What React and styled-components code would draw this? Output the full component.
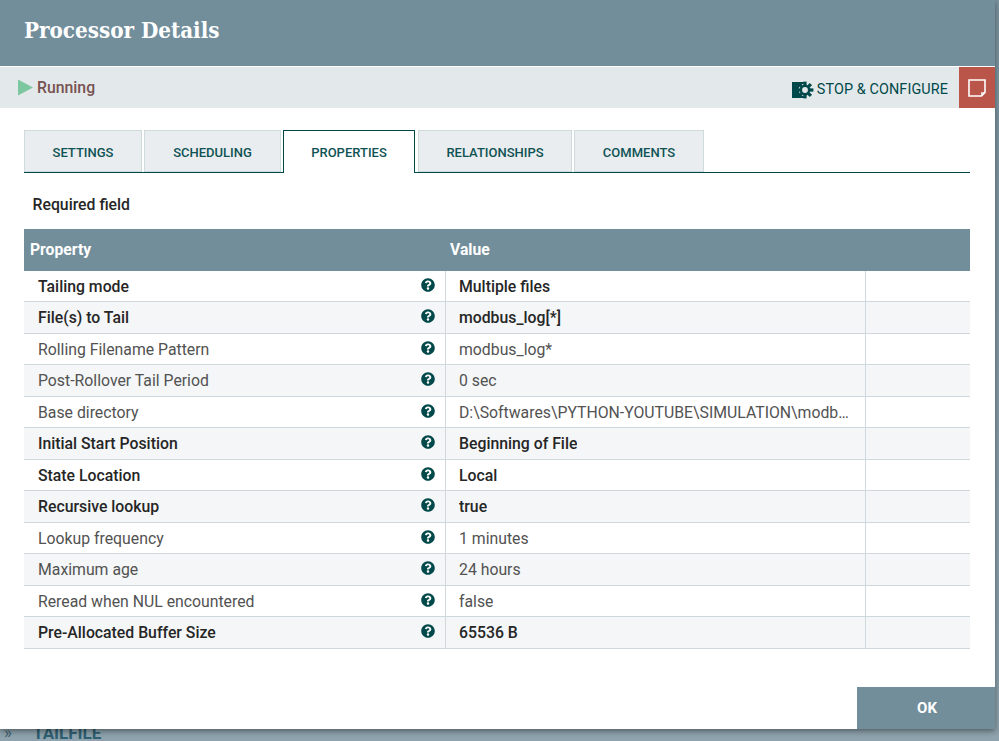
import React from 'react'
import styled, { createGlobalStyle } from 'styled-components'
import { FaQuestionCircle } from 'react-icons/fa'

const Global = createGlobalStyle`
  html, body { margin: 0; padding: 0; height: 100%; overflow: hidden; }
  body { font-family: Roboto, "Liberation Sans", sans-serif; }
`

const Canvas = styled.div`
  position: relative;
  width: 999px;
  height: 741px;
  overflow: hidden;
  background: linear-gradient(#7b949f, #8ea3ad);
`

const CanvasLabel = styled.div`
  position: absolute;
  left: 33px;
  top: 723px;
  font-size: 17px;
  font-weight: 700;
  color: #2f5f72;
`

const Chevrons = styled.div`
  position: absolute;
  left: 4px;
  top: 722px;
  font-size: 17px;
  line-height: 20px;
  color: #3f5f6e;
`

const Dialog = styled.div`
  position: absolute;
  left: 0;
  top: 0;
  width: 995px;
  height: 729px;
  display: flex;
  flex-direction: column;
  background: #fff;
  box-shadow: 0 2px 6px rgba(0, 0, 0, 0.45);
`

const Header = styled.div`
  height: 66px;
  padding: 13px 0 0 24px;
  box-sizing: border-box;
  background: #728e9b;
  color: #fff;
  font-family: "DejaVu Serif Condensed", "DejaVu Serif", serif;
  font-stretch: condensed;
  font-weight: 700;
  font-size: 22.2px;
  line-height: 34px;
`

const StatusBar = styled.div`
  margin-top: 1px;
  height: 41px;
  display: flex;
  align-items: center;
  background: #e3e8eb;
`

const RunState = styled.div`
  display: flex;
  align-items: center;
  margin-left: 17px;
  gap: 4px;
  font-size: 15.8px;
  font-weight: 500;
  color: #775351;
  flex: 1;
`

const StopButton = styled.div`
  display: flex;
  align-items: center;
  gap: 3px;
  margin: 4px 11px 0 0;
  font-size: 14.4px;
  color: #004849;
  letter-spacing: 0.1px;
`

const NoteButton = styled.div`
  width: 36px;
  height: 41px;
  display: flex;
  align-items: center;
  justify-content: center;
  background: #ba554a;
`

const Body = styled.div`
  flex: 1;
  padding: 22px 25px 0 24px;
`

const Tabs = styled.div`
  display: flex;
  height: 43px;
  box-sizing: border-box;
  border-bottom: 1px solid #004849;
`

const Tab = styled.div`
  box-sizing: border-box;
  width: ${p => p.$w}px;
  margin-right: ${p => p.$gap}px;
  height: ${p => (p.$active ? 43 : 42)}px;
  padding-top: ${p => (p.$active ? 0 : 2)}px;
  display: flex;
  align-items: center;
  justify-content: center;
  font-size: 13px;
  font-weight: 500;
  color: #0f5354;
  background: ${p => (p.$active ? '#fff' : '#e9edef')};
  border: 1px solid ${p => (p.$active ? '#004849' : '#cfdadb')};
  border-bottom: ${p => (p.$active ? '0' : '1px solid #cfdadb')};
`

const Required = styled.div`
  margin: 22px 0 0 8.5px;
  height: 34px;
  font-size: 15.8px;
  font-weight: 500;
  line-height: 20px;
  color: #262626;
`

const TableHead = styled.div`
  height: 41.5px;
  padding-bottom: 1px;
  box-sizing: border-box;
  display: flex;
  align-items: center;
  background: #728e9b;
  color: #fff;
  font-size: 15.7px;
  font-weight: 700;
`

const HeadCell = styled.div`
  width: ${p => p.$w}px;
  padding-left: ${p => p.$pad}px;
  box-sizing: border-box;
`

const Row = styled.div`
  display: grid;
  grid-template-columns: 422px 420px 104px;
  height: 31.5px;
  box-sizing: border-box;
  background: ${p => (p.$odd ? '#f4f6f7' : '#fff')};
  border-bottom: 1px solid #cfd8dd;
  font-size: 15.8px;
  font-weight: ${p => (p.$bold ? 500 : 400)};
  color: ${p => (p.$bold ? '#262626' : '#525252')};
`

const NameCell = styled.div`
  display: flex;
  align-items: center;
  justify-content: space-between;
  padding: 1px 10px 0 14px;
  border-right: 1px solid #cfd8dd;
`

const ValueCell = styled.div`
  display: flex;
  align-items: center;
  padding: 1px 16px 0 13px;
  min-width: 0;
  border-right: 1px solid #cfd8dd;
`

const Ellipsis = styled.span`
  overflow: hidden;
  white-space: nowrap;
  text-overflow: ellipsis;
`

const Help = styled(FaQuestionCircle)`
  width: 14px;
  height: 14px;
  margin-top: -3px;
  color: #004849;
`

const Footer = styled.div`
  display: flex;
  justify-content: flex-end;
`

const OkButton = styled.div`
  width: 138px;
  height: 42px;
  display: flex;
  align-items: center;
  justify-content: center;
  padding-left: 2px;
  box-sizing: border-box;
  background: #728e9b;
  color: #fff;
  font-size: 15px;
  font-weight: 700;
`

const rows = [
  ['Tailing mode', 'Multiple files', true],
  ['File(s) to Tail', 'modbus_log[*]', true],
  ['Rolling Filename Pattern', 'modbus_log*', false],
  ['Post-Rollover Tail Period', '0 sec', false],
  ['Base directory', 'D:\\Softwares\\PYTHON-YOUTUBE\\SIMULATION\\modbus_data', false],
  ['Initial Start Position', 'Beginning of File', true],
  ['State Location', 'Local', true],
  ['Recursive lookup', 'true', true],
  ['Lookup frequency', '1 minutes', false],
  ['Maximum age', '24 hours', false],
  ['Reread when NUL encountered', 'false', false],
  ['Pre-Allocated Buffer Size', '65536 B', true],
]

const tabs = [
  ['SETTINGS', 118, 2],
  ['SCHEDULING', 137, 2],
  ['PROPERTIES', 132, 3],
  ['RELATIONSHIPS', 154, 2],
  ['COMMENTS', 130, 0],
]

function PlayIcon() {
  return (
    <svg width="16" height="17" viewBox="0 0 16 17">
      <path d="M1 0.5 L16 8.5 L1 16.5 Z" fill="#7dc7a0" />
    </svg>
  )
}

function StopConfigureIcon() {
  const teeth = [0, 45, 90, 135, 180, 225, 270, 315]
  return (
    <svg width="22" height="18" viewBox="0 0 22 18">
      <rect x="0" y="1" width="14" height="16" fill="#004849" />
      <circle cx="13" cy="9" r="6.4" fill="#e3e8eb" />
      {teeth.map(a => (
        <rect key={a} x="11.4" y="0.6" width="3.2" height="3.4" fill="#004849" transform={`rotate(${a} 13 9)`} />
      ))}
      <circle cx="13" cy="9" r="4.2" fill="none" stroke="#004849" strokeWidth="2.6" />
    </svg>
  )
}

function NoteIcon() {
  return (
    <svg width="18" height="18" viewBox="0 0 18 18" fill="none" stroke="#fff" strokeWidth="1.6">
      <path d="M1 1 H17 V13.5 L13.5 17 H1 Z" />
      <path d="M13.8 16.5 V13.8 H16.5" strokeWidth="1.2" />
    </svg>
  )
}

export default function App() {
  return (
    <Canvas>
      <Global />
      <Chevrons>»</Chevrons>
      <CanvasLabel>TAILFILE</CanvasLabel>
      <Dialog>
        <Header>Processor Details</Header>
        <StatusBar>
          <RunState>
            <PlayIcon />
            Running
          </RunState>
          <StopButton>
            <StopConfigureIcon />
            STOP &amp; CONFIGURE
          </StopButton>
          <NoteButton>
            <NoteIcon />
          </NoteButton>
        </StatusBar>
        <Body>
          <Tabs>
            {tabs.map(([label, w, gap]) => (
              <Tab key={label} $w={w} $gap={gap} $active={label === 'PROPERTIES'}>
                {label}
              </Tab>
            ))}
          </Tabs>
          <Required>Required field</Required>
          <TableHead>
            <HeadCell $w={421} $pad={6}>Property</HeadCell>
            <HeadCell $w={420} $pad={5}>Value</HeadCell>
          </TableHead>
          {rows.map(([name, value, bold], i) => (
            <Row key={name} $odd={i % 2 === 1} $bold={bold}>
              <NameCell>
                {name}
                <Help />
              </NameCell>
              <ValueCell>
                <Ellipsis>{value}</Ellipsis>
              </ValueCell>
              <div />
            </Row>
          ))}
        </Body>
        <Footer>
          <OkButton>OK</OkButton>
        </Footer>
      </Dialog>
    </Canvas>
  )
}
